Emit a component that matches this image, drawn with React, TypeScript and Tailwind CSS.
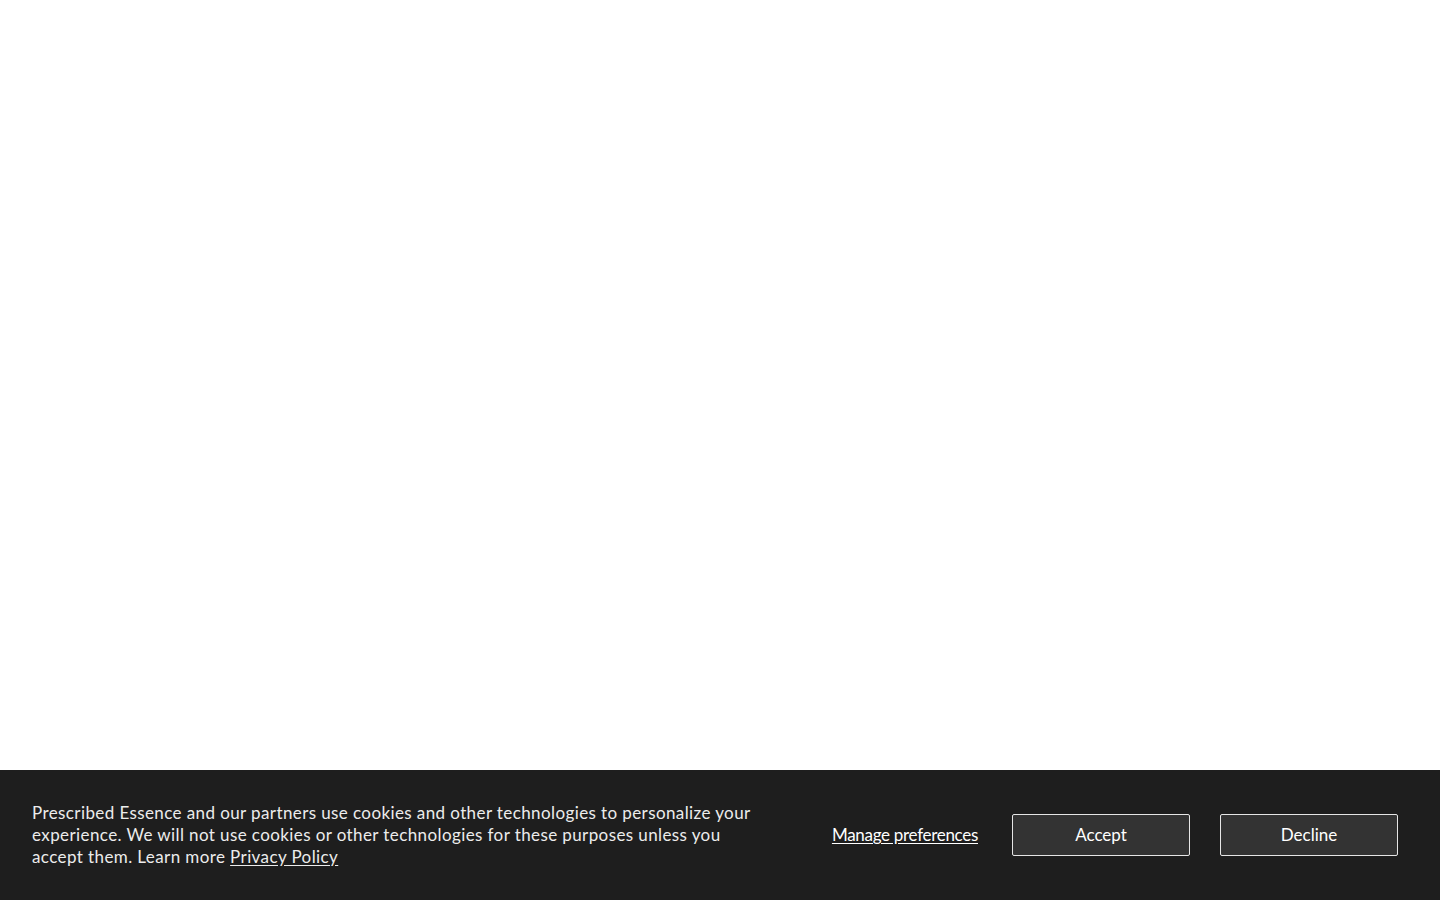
export default function App() {
  return (
    <div className="min-h-screen bg-white flex flex-col" style={{ fontFamily: '"Lato", "Liberation Sans", sans-serif' }}>
      <div className="flex-1" />
      <div className="h-[130px] bg-[#1e1e1e] flex items-center pl-8 pr-[42px]">
        <p className="w-[740px] text-[17px] leading-[22px] tracking-[0.4px] text-[#ececec]">
          Prescribed Essence and our partners use cookies and other technologies to personalize your experience. We will not use cookies or other technologies for these purposes unless you accept them. Learn more{' '}
          <a href="#" className="underline underline-offset-2">Privacy Policy</a>
        </p>
        <div className="ml-auto flex items-center">
          <button className="text-[17px] tracking-[-0.3px] text-white underline underline-offset-2 mr-[34px]">Manage preferences</button>
          <button className="w-[178px] h-[42px] bg-[#333333] border border-[#e6e6e6] rounded-[2px] text-[17px] text-white">Accept</button>
          <button className="w-[178px] h-[42px] bg-[#333333] border border-[#e6e6e6] rounded-[2px] text-[17px] text-white ml-[30px]">Decline</button>
        </div>
      </div>
    </div>
  )
}
